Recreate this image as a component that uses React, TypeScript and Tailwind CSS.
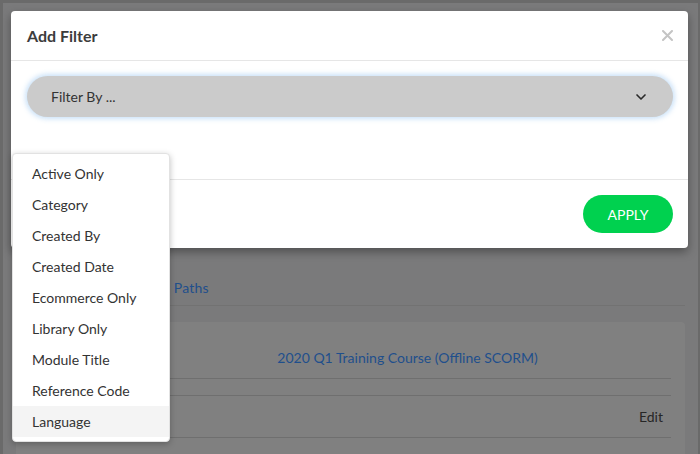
import { ChevronDown } from "lucide-react";

const filterOptions = [
  "Active Only",
  "Category",
  "Created By",
  "Created Date",
  "Ecommerce Only",
  "Library Only",
  "Module Title",
  "Reference Code",
  "Language",
];

function BackgroundPage() {
  return (
    <div className="flex h-full flex-col pl-[13px] pr-[13px]">
      <div className="h-[45px] shrink-0 border-b border-[#737373]" />
      <div className="h-[221px] shrink-0" />
      <div className="flex h-[37px] shrink-0 items-center gap-6 border-b border-[#727272] pl-[100px] text-[14px] text-[#1f4f8c]">
        <span className="tracking-[0.2px]">Learning Paths</span>
      </div>
      <div className="h-[16px] shrink-0" />
      <div className="flex-1 rounded-t-[4px] bg-[#808080] pl-[12px] pr-[14px]">
        <div className="flex h-[57px] items-end justify-center border-b border-[#6f6f6f] pb-[10px] pl-[116px] text-[14px] text-[#1f4f8c]">
          2020 Q1 Training Course (Offline SCORM)
        </div>
        <div className="h-[17px] border-b border-[#6f6f6f]" />
        <div className="flex h-[42px] items-center justify-end border-b border-[#6f6f6f] pr-[8px] text-[14px] text-[#262626]">
          Edit
        </div>
      </div>
    </div>
  );
}

export default function App() {
  return (
    <div
      className="relative h-[454px] w-[700px] overflow-hidden border-l-[3px] border-t-[3px] border-r-[2px] border-[#6a6a6a] bg-[#7a7a7b]"
      style={{ fontFamily: "Lato, 'Open Sans', Arial, sans-serif" }}
    >
      <BackgroundPage />

      {/* modal */}
      <div className="absolute left-[8px] top-[8px] w-[677px] rounded-[4px] bg-white shadow-[0_4px_10px_rgba(0,0,0,0.35)]">
        <div className="flex h-[50px] items-center justify-between border-b border-[#e6e6e6] pl-4 pr-[15px]">
          <h2 className="text-[16px] font-bold text-[#3c3c3c]">Add Filter</h2>
          <svg width="11" height="11" viewBox="0 0 11 11">
            <path d="M1 1L10 10M10 1L1 10" stroke="#c4c4c4" strokeWidth="2" strokeLinecap="round" />
          </svg>
        </div>
        <div className="h-[119px] border-b border-[#e6e6e6] pl-4 pr-[15px] pt-[15px]">
          <div className="flex h-[41px] items-center justify-between rounded-full bg-[#cbcbcb] pl-6 pr-6 shadow-[0_0_5px_2px_rgba(140,190,240,0.45)]">
            <span className="text-[14px] text-[#333]">Filter By ...</span>
            <ChevronDown size={16} strokeWidth={2.5} className="text-[#2a2a2a]" />
          </div>
        </div>
        <div className="flex h-[68px] items-center justify-end pr-[15px]">
          <button
            type="button"
            className="flex h-[38px] w-[90px] items-center justify-center rounded-full bg-[#00d14f] text-[14px] text-white"
          >
            APPLY
          </button>
        </div>
      </div>

      {/* dropdown menu */}
      <ul className="absolute left-[9px] top-[150px] w-[158px] rounded-[4px] border border-[#e2e2e2] bg-white py-[4px] shadow-[0_2px_6px_rgba(0,0,0,0.25)]">
        {filterOptions.map((opt) => (
          <li
            key={opt}
            className={
              opt === "Language"
                ? "flex h-[31px] items-center bg-[#f4f4f4] pl-[19px] text-[14px] text-[#333]"
                : "flex h-[31px] items-center pl-[19px] text-[14px] text-[#333]"
            }
          >
            {opt}
          </li>
        ))}
      </ul>
    </div>
  );
}
